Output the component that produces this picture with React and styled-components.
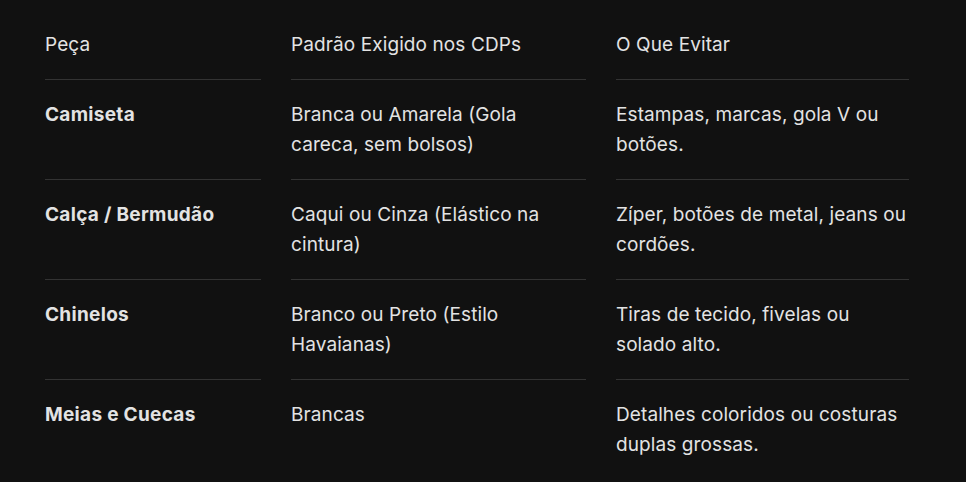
import React from 'react';
import styled, { createGlobalStyle } from 'styled-components';

const GlobalStyle = createGlobalStyle`
  html, body {
    margin: 0;
    background: #111111;
  }
  body {
    font-family: Inter, 'Noto Sans', sans-serif;
    color: #e3e3e3;
  }
`;

const Page = styled.div`
  padding: 10px 0 0 45px;
  min-height: 472px;
`;

const Table = styled.div`
  display: grid;
  grid-template-columns: 216px 295px 293px;
  column-gap: 30px;
`;

const Cell = styled.div`
  padding: 20px 0 19px;
  font-size: 19px;
  line-height: 30px;
  letter-spacing: ${({ $strong }) => ($strong ? '0.3px' : '0.1px')};
  font-weight: ${({ $strong }) => ($strong ? 650 : 400)};
  border-bottom: ${({ $last }) => ($last ? 'none' : '1px solid #333333')};
`;

const head = ['Peça', 'Padrão Exigido nos CDPs', 'O Que Evitar'];

const rows = [
  ['Camiseta', 'Branca ou Amarela (Gola careca, sem bolsos)', 'Estampas, marcas, gola V ou botões.'],
  ['Calça / Bermudão', 'Caqui ou Cinza (Elástico na cintura)', 'Zíper, botões de metal, jeans ou cordões.'],
  ['Chinelos', 'Branco ou Preto (Estilo Havaianas)', 'Tiras de tecido, fivelas ou solado alto.'],
  ['Meias e Cuecas', 'Brancas', 'Detalhes coloridos ou costuras duplas grossas.'],
];

export default function App() {
  return (
    <>
      <GlobalStyle />
      <Page>
        <Table>
          {head.map((h) => (
            <Cell key={h}>{h}</Cell>
          ))}
          {rows.map((row, i) =>
            row.map((text, j) => (
              <Cell key={`${i}-${j}`} $strong={j === 0} $last={i === rows.length - 1}>
                {text}
              </Cell>
            ))
          )}
        </Table>
      </Page>
    </>
  );
}
